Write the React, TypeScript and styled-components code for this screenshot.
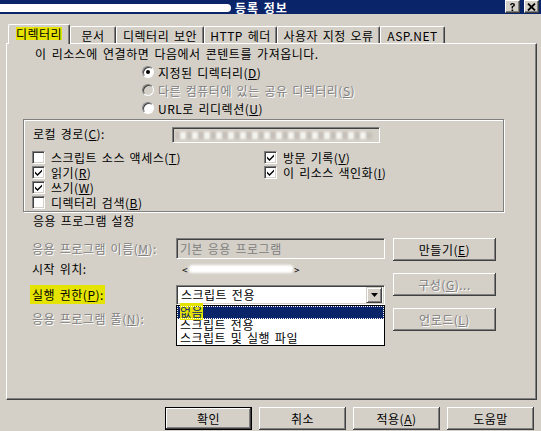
import React from 'react';
import styled, { createGlobalStyle, css } from 'styled-components';

const FACE = '#d4d0c8';
const SHADOW = '#808080';
const DARK = '#404040';
const NAVY = '#0a246a';
const MARK = '#e4e400';

const GlobalStyle = createGlobalStyle`
  html, body { margin: 0; padding: 0; background: ${FACE}; }
  body {
    font-family: "Noto Sans CJK KR", "Liberation Sans", sans-serif;
    font-size: 12px;
    letter-spacing: 0.5px;
    word-spacing: 1.5px;
    color: #000;
  }
  u { text-decoration-thickness: 1px; text-underline-offset: 1px; }
`;

const Window = styled.div`
  width: 541px;
  height: 431px;
  background: ${FACE};
  overflow: hidden;
  display: flex;
  flex-direction: column;
`;

const TitleBar = styled.div`
  height: 14px;
  flex-shrink: 0;
  background: ${NAVY};
  display: flex;
  align-items: center;
`;

const BlurredTitle = styled.div`
  width: 231px;
  height: 8px;
  margin-top: 1px;
  background: #fff;
  border-radius: 0 5px 5px 0;
  filter: blur(0.7px);
`;

const TitleText = styled.span`
  color: #fff;
  font-weight: bold;
  font-size: 12px;
  line-height: 13px;
  margin-top: 1px;
  margin-left: 4px;
  letter-spacing: 1px;
  word-spacing: 1px;
`;

const CaptionButtons = styled.div`
  margin-left: auto;
  display: flex;
  gap: 4px;
  padding-right: 2px;
  align-self: flex-start;
`;

const CaptionButton = styled.div`
  width: 15px;
  height: 13px;
  box-sizing: border-box;
  background: ${FACE};
  border-top: 1px solid #fff;
  border-left: 1px solid #fff;
  border-right: 1px solid ${DARK};
  border-bottom: 1px solid ${DARK};
  box-shadow: inset -1px -1px 0 ${SHADOW};
  display: flex;
  align-items: center;
  justify-content: center;
`;

const TabStrip = styled.div`
  display: flex;
  align-items: flex-end;
  height: 19px;
  margin-top: 10px;
  padding-left: 8px;
  position: relative;
  z-index: 1;
  flex-shrink: 0;
`;

const Tab = styled.div<{ $active?: boolean; $w: number }>`
  width: ${(p) => p.$w}px;
  box-sizing: border-box;
  height: ${(p) => (p.$active ? 20 : 17)}px;
  margin-bottom: ${(p) => (p.$active ? -1 : 0)}px;
  background: ${FACE};
  border-top: 1px solid #fff;
  border-left: 1px solid #fff;
  border-right: 1px solid ${DARK};
  border-radius: 2px 2px 0 0;
  box-shadow: inset -1px 0 0 ${SHADOW};
  display: flex;
  align-items: center;
  justify-content: center;
  padding-bottom: ${(p) => (p.$active ? 2 : 0)}px;
  white-space: nowrap;
  line-height: 13px;
`;

const Marker = styled.span<{ $pad?: boolean }>`
  background: ${MARK};
  ${(p) =>
    p.$pad &&
    css`
      padding: 1px 1px 1px 2px;
      margin-left: -2px;
    `}
`;

const Panel = styled.div`
  margin-left: 6px;
  width: 531px;
  height: 357px;
  box-sizing: border-box;
  border-top: 1px solid #fff;
  border-left: 1px solid #fff;
  border-right: 1px solid ${DARK};
  border-bottom: 1px solid ${DARK};
  box-shadow: inset -1px -1px 0 ${SHADOW};
  display: flex;
  flex-direction: column;
  flex-shrink: 0;
`;

const Intro = styled.div`
  margin-top: 3px;
  padding-left: 28px;
  line-height: 14px;
  height: 14px;
  word-spacing: 2px;
`;

const RadioList = styled.div`
  margin-top: 2px;
  padding-left: 135px;
  display: flex;
  flex-direction: column;
`;

const RadioRow = styled.div<{ $disabled?: boolean }>`
  height: 18px;
  display: flex;
  align-items: center;
  gap: 4px;
  white-space: nowrap;
  ${(p) =>
    p.$disabled &&
    css`
      color: ${SHADOW};
      text-shadow: 1px 1px 0 #fff;
    `}
`;

const RadioCircle = styled.span<{ $checked?: boolean; $disabled?: boolean }>`
  width: 12px;
  height: 12px;
  flex-shrink: 0;
  box-sizing: border-box;
  border-radius: 50%;
  border: 1px solid;
  border-color: ${SHADOW} #fff #fff ${SHADOW};
  background: ${(p) => (p.$disabled ? FACE : '#fff')};
  box-shadow: inset 1px 1px 0 ${DARK};
  display: flex;
  align-items: center;
  justify-content: center;
  &::after {
    content: '';
    display: ${(p) => (p.$checked ? 'block' : 'none')};
    width: 4px;
    height: 4px;
    border-radius: 50%;
    background: #000;
  }
`;

const GroupBox = styled.div`
  margin-top: 2px;
  margin-left: 16px;
  width: 481px;
  box-sizing: border-box;
  border: 1px solid ${SHADOW};
  box-shadow: 1px 1px 0 #fff, inset 1px 1px 0 #fff;
  padding: 7px 0 1px 9px;
`;

const PathRow = styled.div`
  display: flex;
  align-items: center;
  height: 16px;
`;

const PathLabel = styled.span`
  width: 139px;
  line-height: 14px;
  margin-top: -3px;
`;

const SunkenField = styled.div<{ $w: number; $h: number; $disabled?: boolean }>`
  width: ${(p) => p.$w}px;
  height: ${(p) => p.$h}px;
  box-sizing: border-box;
  border: 1px solid;
  border-color: ${SHADOW} #fff #fff ${SHADOW};
  box-shadow: inset 1px 1px 0 ${DARK}, inset -1px -1px 0 ${FACE};
  background: ${(p) => (p.$disabled ? FACE : '#fff')};
  color: ${(p) => (p.$disabled ? SHADOW : '#000')};
  display: flex;
  align-items: center;
  padding-left: 3px;
  white-space: nowrap;
  overflow: hidden;
`;

const BlurText = styled.span<{ $w: number; $tone: string }>`
  display: block;
  width: ${(p) => p.$w}px;
  height: 7px;
  background: repeating-linear-gradient(
    90deg,
    ${(p) => p.$tone} 0 4px,
    #f4f4f0 4px 10px,
    ${(p) => p.$tone} 10px 12px
  );
  filter: blur(1px);
`;

const CheckGrid = styled.div`
  margin-top: 7px;
  display: grid;
  grid-template-columns: 232px auto;
  grid-auto-rows: 15px;
`;

const CheckRow = styled.div`
  display: flex;
  align-items: center;
  gap: 6px;
  white-space: nowrap;
  line-height: 14px;
  margin-left: -1px;
`;

const CheckBoxBox = styled.span`
  width: 13px;
  height: 13px;
  flex-shrink: 0;
  box-sizing: border-box;
  border: 1px solid;
  border-color: ${SHADOW} #fff #fff ${SHADOW};
  box-shadow: inset 1px 1px 0 ${DARK}, inset -1px -1px 0 ${FACE};
  background: #fff;
  display: flex;
  align-items: center;
  justify-content: center;
`;

const SectionTitle = styled.div`
  margin-top: 2px;
  padding-left: 26px;
  line-height: 14px;
  height: 14px;
`;

const AppArea = styled.div`
  margin-top: 10px;
  display: flex;
  align-items: flex-start;
`;

const FieldColumn = styled.div`
  padding-left: 25px;
  display: flex;
  flex-direction: column;
`;

const FieldRow = styled.div<{ $h: number; $mt: number }>`
  display: flex;
  align-items: center;
  height: ${(p) => p.$h}px;
  margin-top: ${(p) => p.$mt}px;
  white-space: nowrap;
`;

const FieldLabel = styled.span<{ $disabled?: boolean }>`
  width: 144px;
  line-height: 14px;
  ${(p) =>
    p.$disabled &&
    css`
      color: ${SHADOW};
      text-shadow: 1px 1px 0 #fff;
    `}
`;

const StartValue = styled.span`
  display: flex;
  align-items: center;
  padding-left: 6px;
  gap: 1px;
  font-size: 10px;
  color: #000;
`;

const StartBlur = styled.span`
  display: block;
  width: 104px;
  height: 8px;
  background: #fff;
  border-radius: 3px;
  filter: blur(0.8px);
`;

const SelectWrap = styled.div`
  position: relative;
`;

const SelectBox = styled.div`
  width: 209px;
  height: 20px;
  box-sizing: border-box;
  border: 1px solid;
  border-color: ${SHADOW} #fff #fff ${SHADOW};
  box-shadow: inset 1px 1px 0 ${DARK}, inset -1px -1px 0 ${FACE};
  background: #fff;
  display: flex;
  align-items: center;
  padding: 0 2px 0 4px;
`;

const SelectText = styled.span`
  flex: 1;
  line-height: 14px;
`;

const ArrowButton = styled.span`
  width: 16px;
  height: 16px;
  box-sizing: border-box;
  background: ${FACE};
  border-top: 1px solid ${FACE};
  border-left: 1px solid ${FACE};
  border-right: 1px solid ${DARK};
  border-bottom: 1px solid ${DARK};
  box-shadow: inset 1px 1px 0 #fff, inset -1px -1px 0 ${SHADOW};
  display: flex;
  align-items: center;
  justify-content: center;
`;

const DropList = styled.div`
  position: absolute;
  left: 0;
  top: 100%;
  width: 209px;
  box-sizing: border-box;
  border: 1px solid #000;
  background: #fff;
  z-index: 5;
`;

const DropItem = styled.div<{ $selected?: boolean }>`
  height: 13px;
  line-height: 12px;
  padding-left: 3px;
  box-sizing: border-box;
  white-space: nowrap;
  ${(p) =>
    p.$selected &&
    css`
      background: ${NAVY};
      outline: 1px dotted #fff;
      outline-offset: -1px;
      color: ${NAVY};
    `}
`;

const ButtonColumn = styled.div`
  margin-left: 8px;
  display: flex;
  flex-direction: column;
  gap: 12px;
`;

const Button = styled.button<{ $w: number; $default?: boolean }>`
  width: ${(p) => p.$w}px;
  height: 23px;
  box-sizing: border-box;
  padding: 0;
  margin: 0;
  background: ${FACE};
  font: inherit;
  font-size: 12px;
  letter-spacing: 0.5px;
  color: #000;
  border: none;
  box-shadow: inset -1px -1px 0 ${DARK}, inset 1px 1px 0 #fff, inset -2px -2px 0 ${SHADOW};
  ${(p) =>
    p.$default &&
    css`
      border: 1px solid #000;
    `}
  &:disabled {
    color: ${SHADOW};
    text-shadow: 1px 1px 0 #fff;
  }
`;

const BottomBar = styled.div`
  margin-top: 7px;
  display: flex;
  justify-content: flex-end;
  gap: 7px;
  padding-right: 7px;
`;

const Check = () => (
  <svg width="9" height="9" viewBox="0 0 9 9">
    <path d="M1 3.5 L3.5 6 L8 1.5 L8 3.5 L3.5 8 L1 5.5 Z" fill="#000" />
  </svg>
);

const DownArrow = () => (
  <svg width="7" height="4" viewBox="0 0 7 4">
    <path d="M0 0 H7 L3.5 4 Z" fill="#000" />
  </svg>
);

const HelpGlyph = () => (
  <svg width="9" height="10" viewBox="0 0 9 10">
    <path d="M2 3 Q2 1 4.5 1 Q7 1 7 3 Q7 4.5 5 5 L5 6.5 L3.6 6.5 L3.6 4.2 Q5.5 3.8 5.5 3 Q5.5 2.3 4.5 2.3 Q3.5 2.3 3.4 3.3 Z" fill="#000" />
    <rect x="3.6" y="7.5" width="1.6" height="1.6" fill="#000" />
  </svg>
);

const CloseGlyph = () => (
  <svg width="9" height="8" viewBox="0 0 9 8">
    <path d="M1 0.5 L8 7.5 M8 0.5 L1 7.5" stroke="#000" strokeWidth="1.8" />
  </svg>
);

export default function App() {
  return (
    <>
      <GlobalStyle />
      <Window>
        <TitleBar>
          <BlurredTitle />
          <TitleText>등록 정보</TitleText>
          <CaptionButtons>
            <CaptionButton>
              <HelpGlyph />
            </CaptionButton>
            <CaptionButton>
              <CloseGlyph />
            </CaptionButton>
          </CaptionButtons>
        </TitleBar>

        <TabStrip>
          <Tab $active $w={62}>
            <Marker>디렉터리</Marker>
          </Tab>
          <Tab $w={46}>문서</Tab>
          <Tab $w={88}>디렉터리 보안</Tab>
          <Tab $w={73}>HTTP 헤더</Tab>
          <Tab $w={103}>사용자 지정 오류</Tab>
          <Tab $w={65}>ASP.NET</Tab>
        </TabStrip>

        <Panel>
          <Intro>이 리소스에 연결하면 다음에서 콘텐트를 가져옵니다.</Intro>
          <RadioList>
            <RadioRow>
              <RadioCircle $checked />
              <span>
                지정된 디렉터리(<u>D</u>)
              </span>
            </RadioRow>
            <RadioRow $disabled>
              <RadioCircle $disabled />
              <span>
                다른 컴퓨터에 있는 공유 디렉터리(<u>S</u>)
              </span>
            </RadioRow>
            <RadioRow>
              <RadioCircle />
              <span>
                URL로 리디렉션(<u>U</u>)
              </span>
            </RadioRow>
          </RadioList>

          <GroupBox>
            <PathRow>
              <PathLabel>
                로컬 경로(<u>C</u>):
              </PathLabel>
              <SunkenField $w={208} $h={16} $disabled>
                <BlurText $w={196} $tone="#c4c0b8" />
              </SunkenField>
            </PathRow>
            <CheckGrid>
              <CheckRow>
                <CheckBoxBox />
                <span>
                  스크립트 소스 액세스(<u>T</u>)
                </span>
              </CheckRow>
              <CheckRow>
                <CheckBoxBox>
                  <Check />
                </CheckBoxBox>
                <span>
                  방문 기록(<u>V</u>)
                </span>
              </CheckRow>
              <CheckRow>
                <CheckBoxBox>
                  <Check />
                </CheckBoxBox>
                <span>
                  읽기(<u>R</u>)
                </span>
              </CheckRow>
              <CheckRow>
                <CheckBoxBox>
                  <Check />
                </CheckBoxBox>
                <span>
                  이 리소스 색인화(<u>I</u>)
                </span>
              </CheckRow>
              <CheckRow>
                <CheckBoxBox>
                  <Check />
                </CheckBoxBox>
                <span>
                  쓰기(<u>W</u>)
                </span>
              </CheckRow>
              <span />
              <CheckRow>
                <CheckBoxBox />
                <span>
                  디렉터리 검색(<u>B</u>)
                </span>
              </CheckRow>
            </CheckGrid>
          </GroupBox>

          <SectionTitle>응용 프로그램 설정</SectionTitle>

          <AppArea>
            <FieldColumn>
              <FieldRow $h={21} $mt={0}>
                <FieldLabel $disabled>
                  응용 프로그램 이름(<u>M</u>):
                </FieldLabel>
                <SunkenField $w={209} $h={21} $disabled>
                  기본 응용 프로그램
                </SunkenField>
              </FieldRow>
              <FieldRow $h={14} $mt={3}>
                <FieldLabel>시작 위치:</FieldLabel>
                <StartValue>
                  &lt;
                  <StartBlur />
                  &gt;
                </StartValue>
              </FieldRow>
              <FieldRow $h={20} $mt={9}>
                <FieldLabel>
                  <Marker $pad>
                    실행 권한(<u>P</u>):
                  </Marker>
                </FieldLabel>
                <SelectWrap>
                  <SelectBox>
                    <SelectText>스크립트 전용</SelectText>
                    <ArrowButton>
                      <DownArrow />
                    </ArrowButton>
                  </SelectBox>
                  <DropList>
                    <DropItem $selected>
                      <Marker>없음</Marker>
                    </DropItem>
                    <DropItem>스크립트 전용</DropItem>
                    <DropItem>스크립트 및 실행 파일</DropItem>
                  </DropList>
                </SelectWrap>
              </FieldRow>
              <FieldRow $h={14} $mt={7}>
                <FieldLabel $disabled>
                  응용 프로그램 풀(<u>N</u>):
                </FieldLabel>
              </FieldRow>
            </FieldColumn>
            <ButtonColumn>
              <Button $w={103}>
                만들기(<u>E</u>)
              </Button>
              <Button $w={103} disabled>
                구성(<u>G</u>)...
              </Button>
              <Button $w={103} disabled>
                언로드(<u>L</u>)
              </Button>
            </ButtonColumn>
          </AppArea>
        </Panel>

        <BottomBar>
          <Button $w={87} $default>
            확인
          </Button>
          <Button $w={87}>취소</Button>
          <Button $w={87}>
            적용(<u>A</u>)
          </Button>
          <Button $w={87}>도움말</Button>
        </BottomBar>
      </Window>
    </>
  );
}
